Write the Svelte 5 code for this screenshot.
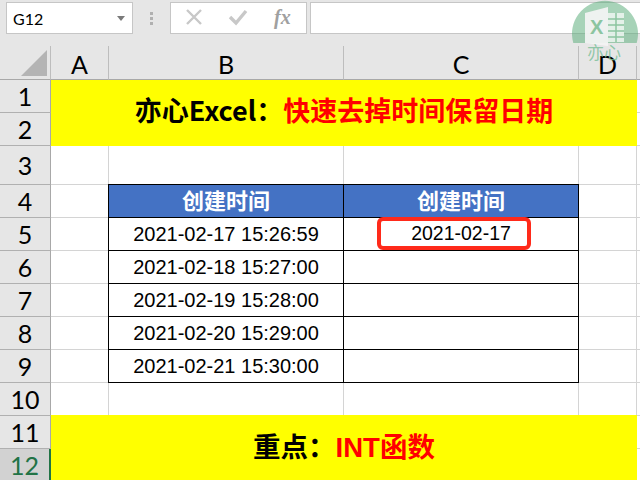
<script>
  const columns = ['A', 'B', 'C', 'D'];
  const times = [
    '2021-02-17 15:26:59',
    '2021-02-18 15:27:00',
    '2021-02-19 15:28:00',
    '2021-02-20 15:29:00',
    '2021-02-21 15:30:00'
  ];
</script>

<div class="app">
  <div class="toolbar">
    <div class="namebox">
      <span>G12</span>
      <i class="caret"></i>
    </div>
    <div class="grip"><i></i><i></i><i></i></div>
    <div class="buttons">
      <svg width="20" height="20" viewBox="0 0 20 20">
        <path d="M3 3 L17 17 M17 3 L3 17" stroke="#c8c8c8" stroke-width="2.4" fill="none" />
      </svg>
      <svg width="20" height="20" viewBox="0 0 20 20">
        <path d="M2 10 L8 16 L18 4" stroke="#c8c8c8" stroke-width="3.4" fill="none" />
      </svg>
      <span class="fx">fx</span>
    </div>
    <div class="formula"></div>
  </div>

  <div class="sheet">
    <div class="corner">
      <svg width="51" height="33" viewBox="0 0 51 33">
        <path d="M21 30 L47 4 L47 30 Z" fill="#b4b4b4" />
      </svg>
    </div>
    {#each columns as col}
      <div class="colhead">{col}</div>
    {/each}
    <div class="colhead last"></div>

    <div class="rowhead">1</div>
    <div class="banner top">
      <span>亦心Excel：</span><span class="red">快速去掉时间保留日期</span>
    </div>
    <div class="edge"></div>
    <div class="rowhead">2</div>
    <div class="edge"></div>

    <div class="rowhead">3</div>
    <div class="cell"></div><div class="cell"></div><div class="cell"></div><div class="cell"></div>
    <div class="edge"></div>

    <div class="rowhead">4</div>
    <div class="cell"></div>
    <div class="tcell head"><span>创建时间</span></div>
    <div class="tcell head"><span>创建时间</span></div>
    <div class="cell"></div>
    <div class="edge"></div>

    {#each times as time, i}
      <div class="rowhead">{i + 5}</div>
      <div class="cell"></div>
      <div class="tcell">{time}</div>
      <div class="tcell">
        {#if i === 0}
          <span class="date">2021-02-17</span>
          <div class="mark"></div>
        {/if}
      </div>
      <div class="cell"></div>
      <div class="edge"></div>
    {/each}

    <div class="rowhead">10</div>
    <div class="cell"></div><div class="cell"></div><div class="cell"></div><div class="cell"></div>
    <div class="edge"></div>

    <div class="rowhead">11</div>
    <div class="banner bottom">
      <span>重点：</span><span class="red">INT函数</span>
    </div>
    <div class="edge"></div>
    <div class="rowhead active">12</div>
    <div class="edge"></div>
  </div>

  <div class="logo">
    <svg width="68" height="46" viewBox="0 0 68 46">
      <path d="M2.3 43 A33 33 0 1 1 65.7 43 Z" fill="#5fae7e" fill-opacity="0.55" />
      <path d="M37 13 H53 V42 H37 Z" fill="#eef6f1" fill-opacity="0.85" />
      <path d="M37 19 H53 M37 25 H53 M37 31 H53 M37 37 H53 M45 13 V42" stroke="#8cc5a0" stroke-width="1.5" fill="none" />
      <path d="M14 13 L37 7 V46 L14 43 Z" fill="#f4f4f4" fill-opacity="0.92" />
    </svg>
    <span class="logox">X</span>
    <span class="logotext">亦心</span>
  </div>
</div>

<style>
  :global(body) {
    margin: 0;
    overflow: hidden;
    background: #fff;
  }
  .app {
    width: 640px;
    height: 480px;
    position: relative;
    overflow: hidden;
    font-family: "Liberation Sans", "Noto Sans CJK SC", sans-serif;
    color: #000;
  }

  .toolbar {
    height: 46px;
    box-sizing: border-box;
    background: #e6e6e6;
    padding: 2px 0 0 6px;
    display: flex;
    align-items: flex-start;
  }
  .namebox,
  .buttons,
  .formula {
    height: 32px;
    box-sizing: border-box;
    background: #fff;
    border: 1px solid #c6c6c6;
    display: flex;
    align-items: center;
  }
  .namebox {
    width: 127px;
    padding: 0 6px 0 6px;
    justify-content: space-between;
    font: 16px Lato, sans-serif;
  }
  .caret {
    border: 4px solid transparent;
    border-top: 5px solid #7a7a7a;
    border-bottom: 0;
    margin-right: 1px;
  }
  .grip {
    width: 37px;
    height: 32px;
    display: flex;
    flex-direction: column;
    align-items: center;
    justify-content: center;
    gap: 2px;
  }
  .grip i {
    width: 3px;
    height: 3px;
    background: #b0b0b0;
  }
  .buttons {
    width: 137px;
    padding: 0 0 2px 13px;
    gap: 24px;
  }
  .fx {
    font: italic bold 20px "Liberation Serif", serif;
    color: #a0a0a0;
    margin-left: 2px;
  }
  .formula {
    flex: 1;
    margin-left: 3px;
    border-right: 0;
  }

  .sheet {
    display: grid;
    grid-template-columns: 51px 58px 235px 235px 58px 3px;
    grid-template-rows: 34px 33px 33px 39px repeat(8, 33px) 32px;
  }
  .sheet > div {
    box-sizing: border-box;
  }
  .corner,
  .colhead {
    background: #e6e6e6;
    border-bottom: 1px solid #a8a8a8;
    border-right: 1px solid #bdbdbd;
  }
  .colhead {
    display: flex;
    align-items: center;
    justify-content: center;
    font: 25px Lato, sans-serif;
    padding-top: 3px;
  }
  .colhead.last {
    border-right: 0;
  }
  .rowhead {
    background: #e6e6e6;
    border-bottom: 1px solid #b0b0b0;
    border-right: 1px solid #a8a8a8;
    display: flex;
    align-items: center;
    justify-content: center;
    font: 25px Lato, sans-serif;
  }
  .rowhead.active {
    background: #d2d2d2;
    color: #217346;
    border-right: 2px solid #217346;
    border-bottom: 0;
  }
  .cell {
    border-right: 1px solid #d4d4d4;
    border-bottom: 1px solid #d4d4d4;
  }
  .edge {
    border-bottom: 1px solid #d4d4d4;
  }
  .tcell {
    position: relative;
    border: 1px solid #000;
    margin: -1px 0 0 -1px;
    display: flex;
    align-items: center;
    justify-content: center;
    font-size: 20px;
  }
  .tcell.head {
    background: #4472c4;
    color: #fff;
    font-size: 22px;
    font-weight: 700;
  }
  .tcell.head span {
    margin-top: -4px;
  }
  .date {
    font-size: 19.5px;
    margin-top: -1px;
  }
  .mark {
    position: absolute;
    left: 33px;
    top: -1px;
    width: 154px;
    height: 33px;
    box-sizing: border-box;
    border: 4px solid #ff2a1a;
    border-radius: 6px;
  }
  .banner {
    grid-column: span 4;
    grid-row: span 2;
    background: #ff0;
    display: flex;
    align-items: center;
    justify-content: center;
    font-weight: 700;
  }
  .banner.top {
    font-family: "Noto Sans CJK SC", sans-serif;
    font-size: 27px;
    padding-bottom: 8px;
  }
  .banner.bottom {
    font-size: 27.5px;
    margin-top: -1px;
    padding-bottom: 6px;
  }
  .red {
    color: #f00;
  }

  .logo {
    position: absolute;
    left: 571px;
    top: 0;
    width: 68px;
    height: 64px;
  }
  .logo svg {
    display: block;
  }
  .logox {
    position: absolute;
    left: 19px;
    top: 16px;
    font: 700 20px "Liberation Sans", sans-serif;
    color: #8cc5a0;
  }
  .logotext {
    position: absolute;
    left: 16px;
    top: 44px;
    font-size: 17px;
    line-height: 20px;
    color: rgba(120, 190, 150, 0.8);
  }
</style>
